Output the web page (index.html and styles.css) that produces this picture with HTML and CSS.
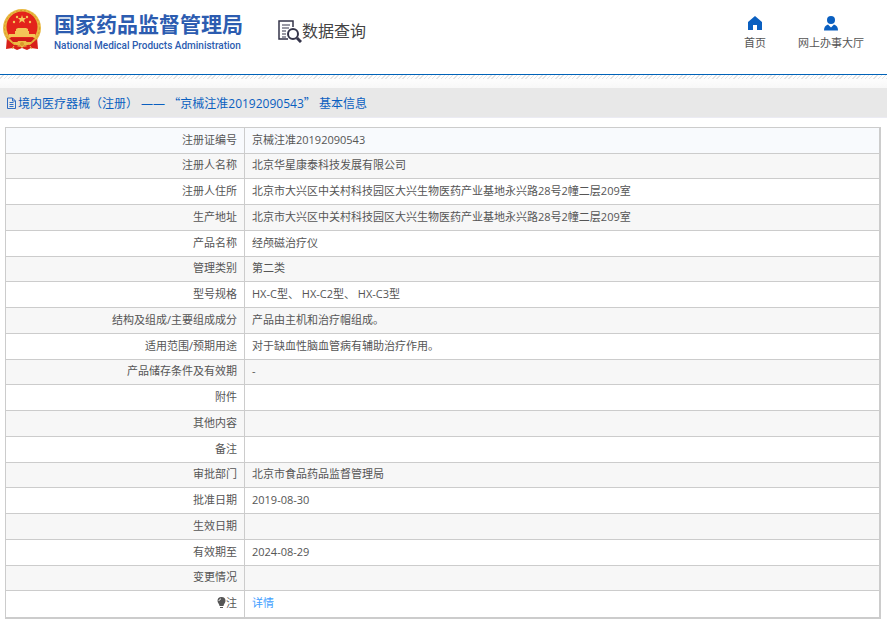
FILE: index.html
```html
<!DOCTYPE html>
<html lang="zh-CN">
<head>
    <meta charset="UTF-8">
    <meta name="viewport" content="width=device-width, initial-scale=1.0">
    <title>国家药品监督管理局 数据查询</title>
    <link rel="stylesheet" href="styles.css">
</head>
<body>

    <header class="header">
        <a class="logo" href="#">
            <svg class="emblem" viewBox="0 0 40 44" aria-hidden="true">
                <path d="M5 28L4 40l7-1 4 2 5-2 5 2 4-2 7 1-1-12z" fill="#d8201a"/>
                <circle cx="20" cy="19" r="19" fill="#e9b840"/>
                <circle cx="20" cy="19" r="17.500" fill="none" stroke="#d39a2c" stroke-dasharray="2 2"/>
                <circle cx="20" cy="18" r="15.500" fill="#e3231b"/>
                <path d="M20 6l1 3h3l-2 2 1 3-3-2-3 2 1-3-2-2h3z" fill="#f5c95a"/>
                <g fill="#f5c95a">
                    <circle cx="12" cy="13" r="1.200"/>
                    <circle cx="15" cy="8" r="1.200"/>
                    <circle cx="25" cy="8" r="1.200"/>
                    <circle cx="28" cy="13" r="1.200"/>
                </g>
                <path d="M14 20l2-1h8l2 1v2h1v3h6v3H7v-3h6v-3h1z" fill="#f3c657"/>
                <path d="M7 29h26l-4 4H11z" fill="#cf1d18"/>
                <path d="M5 30l7 6 5-1 3-3 3 3 5 1 7-6-1 5-6 3-5-2-3 3-3-3-5 2-6-3z" fill="#d8201a"/>
                <path d="M10 33l5 1 1-2h8l1 2 5-1-4 3h-3l-3 3-3-3h-3z" fill="#edbc45"/>
                <circle cx="20" cy="35" r="2" fill="#d9982b"/>
                <path d="M12 37l-2 3M28 37l2 3" stroke="#edbc45"/>
            </svg>
            <span class="logo-text">
                <span class="logo-cn">国家药品监督管理局</span>
                <span class="logo-en">National Medical Products Administration</span>
            </span>
        </a>
        <div class="system">
            <svg class="system-icon" viewBox="0 0 24 24" fill="none" stroke="#35354a" aria-hidden="true">
                <path d="M15 8V2H1v18h9" stroke-width="1.500"/>
                <path d="M4 6h8M4 9h7M4 12h4M4 15h4M4 18h4" stroke-width="1"/>
                <circle cx="15" cy="15" r="5" stroke-width="2"/>
                <path d="M19 19l4 4" stroke-width="3"/>
            </svg>
            <span>数据查询</span>
        </div>
        <nav class="nav">
            <a href="#">
                <svg viewBox="0 0 16 16" fill="#0a5fc0" aria-hidden="true">
                    <path d="M8 1L1 7v8h5v-5h4v5h5V7z"/>
                </svg>
                首页
            </a>
            <a href="#">
                <svg viewBox="0 0 16 16" fill="#0a5fc0" aria-hidden="true">
                    <circle cx="8" cy="5" r="4"/>
                    <path d="M1 15.500c0-3 1-5 4-6l3 3 3-3c3 1 4 3 4 6z"/>
                </svg>
                网上办事大厅
            </a>
        </nav>
    </header>
    <div class="stripe"></div>

    <h1 class="title">
        <svg class="title-icon" viewBox="0 0 11 12" fill="none" stroke="#2f6dc4" aria-hidden="true">
            <path d="M1.500 1h5l3 3v7.500h-8zM6.500 1v3h3M3.500 5.500h4M3.500 7.500h4M3.500 9.500h4"/>
        </svg>
        <span>境内医疗器械（注册） —— <span class="quote">“</span>京械注准20192090543<span class="quote">”</span> 基本信息</span>
    </h1>

    <main class="content">
        <table class="info">
            <tbody>
                <tr><th scope="row">注册证编号</th><td>京械注准20192090543</td></tr>
                <tr><th scope="row">注册人名称</th><td>北京华星康泰科技发展有限公司</td></tr>
                <tr><th scope="row">注册人住所</th><td>北京市大兴区中关村科技园区大兴生物医药产业基地永兴路28号2幢二层209室</td></tr>
                <tr><th scope="row">生产地址</th><td>北京市大兴区中关村科技园区大兴生物医药产业基地永兴路28号2幢二层209室</td></tr>
                <tr><th scope="row">产品名称</th><td>经颅磁治疗仪</td></tr>
                <tr><th scope="row">管理类别</th><td>第二类</td></tr>
                <tr><th scope="row">型号规格</th><td>HX-C型、 HX-C2型、 HX-C3型</td></tr>
                <tr><th scope="row">结构及组成/主要组成成分</th><td>产品由主机和治疗帽组成。</td></tr>
                <tr><th scope="row">适用范围/预期用途</th><td>对于缺血性脑血管病有辅助治疗作用。</td></tr>
                <tr><th scope="row">产品储存条件及有效期</th><td>-</td></tr>
                <tr><th scope="row">附件</th><td></td></tr>
                <tr><th scope="row">其他内容</th><td></td></tr>
                <tr><th scope="row">备注</th><td></td></tr>
                <tr><th scope="row">审批部门</th><td>北京市食品药品监督管理局</td></tr>
                <tr><th scope="row">批准日期</th><td>2019-08-30</td></tr>
                <tr><th scope="row">生效日期</th><td></td></tr>
                <tr><th scope="row">有效期至</th><td>2024-08-29</td></tr>
                <tr><th scope="row">变更情况</th><td></td></tr>
                <tr>
                    <th scope="row">
                        <svg class="bulb" viewBox="0 0 9 11" aria-hidden="true">
                            <path d="M4.500 0a4 4 0 0 1 4 4c0 2-2 3-2 5h-4c0-2-2-3-2-5a4 4 0 0 1 4-4zM3 10h3v1H3z" fill="#555"/>
                            <path d="M2 4c0-1 1-2 2-2" stroke="#fff" fill="none"/>
                        </svg>注
                    </th>
                    <td><a href="#">详情</a></td>
                </tr>
            </tbody>
        </table>
    </main>

</body>
</html>
```
FILE: styles.css
```css
* {
    box-sizing: border-box;
}
body {
    margin: 0;
    font-family: "Open Sans", "Noto Sans CJK SC", sans-serif;
    font-size: 11px;
    color: #555;
    background-color: #fff;
}
a {
    text-decoration: none;
}
/* Header */
.header {
    display: flex;
    align-items: flex-start;
    height: 75px;
    padding: 9px 23px 0 2px;
    border-bottom: 1px solid #0062b8;
}
.logo {
    display: flex;
    gap: 12px;
    color: #2c5cb0;
}
.emblem {
    width: 40px;
    height: 44px;
}
.logo-text {
    display: flex;
    flex-direction: column;
    white-space: nowrap;
}
.logo-cn {
    font-size: 21px;
    line-height: 30px;
    font-weight: bold;
}
.logo-en {
    font-family: Roboto, sans-serif;
    font-size: 10px;
    line-height: 14px;
    font-weight: 500;
}
.system {
    display: flex;
    align-items: center;
    margin: 9px 0 0 35px;
    font-size: 16px;
    line-height: 26px;
    color: #444;
    white-space: nowrap;
}
.system-icon {
    width: 24px;
    height: 24px;
}
.nav {
    display: flex;
    gap: 32px;
    margin-left: auto;
    padding-top: 6px;
}
.nav a {
    display: flex;
    flex-direction: column;
    align-items: center;
    gap: 4px;
    line-height: 16px;
    color: #555;
}
.nav svg {
    width: 16px;
    height: 16px;
}
.stripe {
    height: 13px;
    background: repeating-linear-gradient(135deg, transparent 0 2px, #e4e4e4 2px 3px) top / 100% 4px no-repeat,
        linear-gradient(#fff, #f8f8f8);
}
/* Section title */
.title {
    display: flex;
    align-items: center;
    gap: 1px;
    height: 30px;
    margin: 0;
    padding-left: 6px;
    font-size: 12px;
    font-weight: normal;
    color: #0a5fc0;
    background-color: #e8e8e8;
    border-bottom: 1px solid #ebebf3;
}
.title-icon {
    width: 11px;
    height: 12px;
}
/* full-width Chinese quotation marks */
.quote {
    font-family: "Noto Sans CJK SC", sans-serif;
}
/* Detail table */
.content {
    margin: 9px 6px 0 5px;
    border-right: 1px solid #ccc;
    border-bottom: 1px solid #ccc;
}
.info {
    width: 100%;
    border-collapse: collapse;
}
.info th,
.info td {
    height: 26px;
    padding: 0 7px 2px;
    border: 1px solid #ccc;
    line-height: 16px;
    font-weight: normal;
    text-align: left;
}
.info th {
    width: 239px;
    text-align: right;
}
.info tr:nth-child(even) {
    background-color: #f7f7f7;
}
.info tr:first-child {
    background-color: #f8fafd;
}
.info tr:nth-child(4n+2) th,
.info tr:nth-child(4n+2) td {
    height: 25px;
}
.info tr:last-child th,
.info tr:last-child td {
    height: 27px;
}
.info a {
    color: #409eff;
}
.bulb {
    width: 9px;
    height: 11px;
    vertical-align: -1px;
}
```
